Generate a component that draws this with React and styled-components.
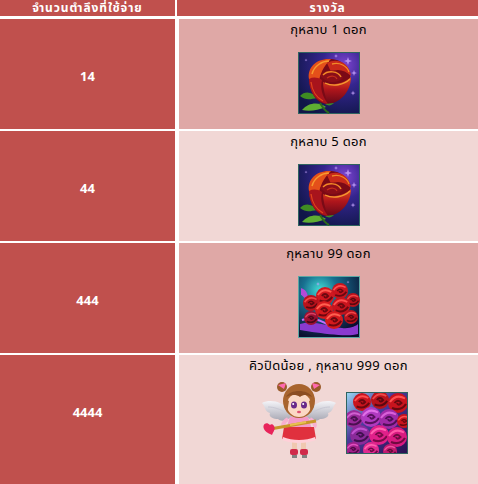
import styled, { createGlobalStyle } from "styled-components";

const GlobalStyle = createGlobalStyle`
  body {
    margin: 0;
    background: #fff;
  }
`;

const rewards = [
  { amount: "14", title: "กุหลาบ 1 ดอก", items: ["rose"] },
  { amount: "44", title: "กุหลาบ 5 ดอก", items: ["rose"] },
  { amount: "444", title: "กุหลาบ 99 ดอก", items: ["bouquet"] },
  { amount: "4444", title: "คิวปิดน้อย , กุหลาบ 999 ดอก", items: ["cupid", "bigBouquet"] },
];

// one blossom seen from above: a disc with a few curled petal lines
const Blossom = ({ x, y, r, fill, dark, light }) => (
  <g>
    <circle cx={x} cy={y} r={r} fill={fill} />
    <path
      d={`M${x - r * 0.8} ${y - r * 0.1} Q${x - r * 0.2} ${y - r * 0.95} ${x + r * 0.7} ${y - r * 0.45}`}
      stroke={light}
      strokeWidth={r * 0.2}
      fill="none"
    />
    <path
      d={`M${x - r * 0.6} ${y + r * 0.5} Q${x + r * 0.3} ${y + r * 0.85} ${x + r * 0.8} ${y + r * 0.1}`}
      stroke={dark}
      strokeWidth={r * 0.22}
      fill="none"
    />
    <path
      d={`M${x - r * 0.35} ${y} Q${x} ${y - r * 0.45} ${x + r * 0.35} ${y} Q${x} ${y + r * 0.35} ${x - r * 0.1} ${y}`}
      stroke={dark}
      strokeWidth={r * 0.2}
      fill="none"
    />
  </g>
);

const Sparkle = ({ x, y, s }) => (
  <path
    d={`M${x} ${y - s} L${x + s * 0.25} ${y - s * 0.25} L${x + s} ${y} L${x + s * 0.25} ${y + s * 0.25} L${x} ${y + s} L${x - s * 0.25} ${y + s * 0.25} L${x - s} ${y} L${x - s * 0.25} ${y - s * 0.25}Z`}
    fill="#c9a6ff"
    opacity="0.8"
  />
);

const RoseIcon = () => (
  <svg width="62" height="62" viewBox="0 0 62 62">
    <defs>
      <radialGradient id="roseBg" cx="0.75" cy="0.2" r="0.9">
        <stop offset="0" stopColor="#7e44d0" />
        <stop offset="0.4" stopColor="#34258e" />
        <stop offset="1" stopColor="#101648" />
      </radialGradient>
      <linearGradient id="frontPetal" x1="0" y1="0" x2="0" y2="1">
        <stop offset="0" stopColor="#e4501c" />
        <stop offset="0.45" stopColor="#b0161c" />
        <stop offset="1" stopColor="#660818" />
      </linearGradient>
    </defs>
    <rect x="0.5" y="0.5" width="61" height="61" fill="url(#roseBg)" stroke="#2f6460" />
    <Sparkle x={50} y={9} s={4} />
    <Sparkle x={56} y={21} s={3} />
    <Sparkle x={55} y={41} s={2.5} />
    <Sparkle x={38} y={4} s={2} />
    <Sparkle x={8} y={8} s={1.5} />
    <path d="M2 44 C7 38 15 40 19 46 C13 47 8 49 2 44Z" fill="#3f8c22" />
    <path d="M4 58 C11 50 21 50 28 55 C20 58 12 60 4 58Z" fill="#5fae32" />
    <path d="M22 51 C25 56 27 59 31 61" stroke="#2c6a1a" strokeWidth="2" fill="none" />
    {/* base bud */}
    <path d="M11 26 C10 14 21 6 33 7 C46 8 54 17 52 29 C50 42 41 51 30 52 C19 52 12 42 11 26Z" fill="#7a0a16" />
    {/* back petals */}
    <path d="M11 27 C9 15 19 6 33 7 C28 12 23 18 21 29Z" fill="#e4501a" />
    <path d="M14 22 C16 14 24 9 31 9" stroke="#f89a30" strokeWidth="1.5" fill="none" />
    <path d="M29 11 C39 5 52 11 53 24 C47 18 39 16 33 20Z" fill="#c82a1a" />
    <path d="M34 12 C42 10 49 14 51 20" stroke="#f08a28" strokeWidth="1.3" fill="none" />
    {/* inner curl */}
    <path d="M22 24 C28 16 42 17 45 26 C41 31 32 31 27 28Z" fill="#8a0e18" />
    <path d="M25 23 C30 18 40 19 43 25" stroke="#f28a26" strokeWidth="1.4" fill="none" />
    <path d="M29 26 C33 23 38 24 39 27" stroke="#c8301c" strokeWidth="1.2" fill="none" />
    {/* front petals */}
    <path d="M11 27 C11 40 18 50 30 52 C24 44 22 36 24 28 C19 25 15 25 11 27Z" fill="#a8141c" />
    <path d="M13 30 C14 39 19 46 25 49" stroke="#e0441c" strokeWidth="1.3" fill="none" />
    <path d="M25 30 C34 34 46 32 53 25 C53 38 44 50 30 52 C27 44 25 36 25 30Z" fill="url(#frontPetal)" />
    <path d="M27 31 C35 35 46 33 52 27" stroke="#f49a30" strokeWidth="1.3" fill="none" />
    <path d="M27 52 C30 54 33 54 36 51 C33 51 30 52 27 52Z" fill="#3f8c22" />
  </svg>
);

const BouquetIcon = () => (
  <svg width="62" height="62" viewBox="0 0 62 62">
    <defs>
      <radialGradient id="bqBg" cx="0.35" cy="0.22" r="0.8">
        <stop offset="0" stopColor="#42dcd4" />
        <stop offset="0.35" stopColor="#187090" />
        <stop offset="1" stopColor="#0a0f30" />
      </radialGradient>
    </defs>
    <rect x="0.5" y="0.5" width="61" height="61" fill="url(#bqBg)" stroke="#5aa8a4" />
    <Sparkle x={20} y={8} s={2} />
    <Sparkle x={50} y={6} s={1.5} />
    <path d="M3 12 C9 14 11 19 9 26 C6 21 4 19 3 19Z" fill="#b44ad8" />
    <path d="M2 48 C14 44 30 50 44 52 C52 53 58 50 60 48 L60 58 C50 61 30 58 14 56 C8 55 4 54 2 54Z" fill="#8a3ad0" />
    <path d="M4 44 C16 40 26 46 32 50" stroke="#c070ff" strokeWidth="2" fill="none" />
    <Blossom x={42} y={15} r={8} fill="#c8141e" dark="#6a0810" light="#ff5050" />
    <Blossom x={27} y={20} r={9} fill="#d01820" dark="#6a0810" light="#ff5a50" />
    <Blossom x={55} y={24} r={7} fill="#b8121c" dark="#5a0810" light="#f04848" />
    <Blossom x={13} y={27} r={8} fill="#b8121c" dark="#5a0810" light="#f04848" />
    <Blossom x={43} y={30} r={9} fill="#c8141e" dark="#6a0810" light="#ff5050" />
    <Blossom x={26} y={34} r={9} fill="#d41a1e" dark="#6a0810" light="#ff6050" />
    <Blossom x={13} y={42} r={7} fill="#9a1030" dark="#4a0618" light="#d84060" />
    <Blossom x={36} y={44} r={9} fill="#d41a1e" dark="#6a0810" light="#ff6050" />
    <Blossom x={53} y={41} r={7} fill="#b8121c" dark="#5a0810" light="#f04848" />
  </svg>
);

const BigBouquetIcon = () => (
  <svg width="62" height="62" viewBox="0 0 62 62">
    <defs>
      <linearGradient id="bbBg" x1="0" y1="0" x2="1" y2="1">
        <stop offset="0" stopColor="#9ad8f4" />
        <stop offset="0.4" stopColor="#4a3a9a" />
        <stop offset="1" stopColor="#2a1050" />
      </linearGradient>
    </defs>
    <rect x="0.5" y="0.5" width="61" height="61" fill="url(#bbBg)" stroke="#2f6460" />
    <Blossom x={16} y={10} r={9} fill="#c8141e" dark="#6a0810" light="#ff5050" />
    <Blossom x={34} y={8} r={9} fill="#b8121c" dark="#5a0810" light="#f04848" />
    <Blossom x={52} y={11} r={10} fill="#c8141e" dark="#6a0810" light="#ff5050" />
    <Blossom x={8} y={27} r={9} fill="#9a2a9a" dark="#4a1050" light="#d060d0" />
    <Blossom x={25} y={25} r={10} fill="#b03ac0" dark="#5a1060" light="#e070e8" />
    <Blossom x={43} y={27} r={10} fill="#a02aa8" dark="#501058" light="#d860d8" />
    <Blossom x={58} y={29} r={7} fill="#c8141e" dark="#6a0810" light="#ff5050" />
    <Blossom x={14} y={43} r={10} fill="#8a2a9a" dark="#401050" light="#c050d0" />
    <Blossom x={33} y={43} r={10} fill="#e0208a" dark="#7a0a48" light="#ff60b0" />
    <Blossom x={51} y={45} r={10} fill="#d81a80" dark="#700a40" light="#ff58a8" />
    <Blossom x={7} y={57} r={7} fill="#a0208a" dark="#500a48" light="#e050c0" />
    <Blossom x={25} y={58} r={8} fill="#e02a90" dark="#700a48" light="#ff60b0" />
    <Blossom x={44} y={59} r={7} fill="#c01a70" dark="#600a38" light="#f050a0" />
    <rect x="0.5" y="0.5" width="61" height="61" fill="none" stroke="#2f6460" />
  </svg>
);

const CupidIcon = () => (
  <svg width="78" height="82" viewBox="0 0 78 82">
    <defs>
      <linearGradient id="wing" x1="0" y1="0" x2="0" y2="1">
        <stop offset="0" stopColor="#f4f4f8" />
        <stop offset="1" stopColor="#a8a8b4" />
      </linearGradient>
    </defs>
    <path d="M30 34 C22 24 10 22 2 26 C6 30 4 34 10 36 C8 40 14 42 18 42 C22 46 28 42 32 40Z" fill="url(#wing)" />
    <path d="M48 34 C56 24 68 22 76 26 C72 30 74 34 68 36 C70 40 64 42 60 42 C56 46 50 42 46 40Z" fill="url(#wing)" />
    <path d="M8 30 C14 30 20 32 26 36 M70 30 C64 30 58 32 52 36" stroke="#c8c8d4" strokeWidth="1" fill="none" />
    <rect x="32" y="64" width="5" height="10" fill="#f0c8b0" />
    <rect x="41" y="64" width="5" height="10" fill="#f0c8b0" />
    <rect x="30" y="72" width="8" height="6" rx="2" fill="#d02a4a" />
    <rect x="40" y="72" width="8" height="6" rx="2" fill="#d02a4a" />
    <rect x="32" y="78" width="5" height="3" fill="#808080" />
    <rect x="42" y="78" width="5" height="3" fill="#808080" />
    <path d="M30 40 L48 40 L52 52 L26 52Z" fill="#f49ac8" />
    <path d="M24 50 L54 50 L56 62 C46 66 32 66 22 62Z" fill="#e0303e" />
    <path d="M23 60 C32 64 46 64 55 60 L56 63 C46 67 32 67 22 63Z" fill="#ffd0d8" />
    <path d="M28 42 C24 44 22 48 24 50" stroke="#f7b0d0" strokeWidth="4" fill="none" />
    <path d="M50 42 C54 44 56 48 54 50" stroke="#f7b0d0" strokeWidth="4" fill="none" />
    <path d="M10 52 L56 44" stroke="#c8962a" strokeWidth="3" />
    <path d="M30 48 L46 45" stroke="#e8c050" strokeWidth="2" />
    <path d="M10 48 C6 44 2 48 4 52 C5 55 10 57 12 58 C13 55 16 52 14 49 C13 47 11 47 10 48Z" fill="#e8245a" />
    <circle cx="22" cy="10" r="5" fill="#9a5a2a" />
    <circle cx="56" cy="10" r="5" fill="#9a5a2a" />
    <path d="M18 8 L26 6 L24 12Z" fill="#ff6ab0" />
    <path d="M60 8 L52 6 L54 12Z" fill="#ff6ab0" />
    <ellipse cx="39" cy="24" rx="16" ry="17" fill="#a8642e" />
    <ellipse cx="39" cy="28" rx="12" ry="12" fill="#fbd8c4" />
    <path d="M26 20 C30 12 48 12 52 20 C48 18 44 17 40 20 C36 17 30 18 26 20Z" fill="#8c4e22" />
    <path d="M25 22 L27 36 L29 24Z" fill="#a8642e" />
    <path d="M53 22 L51 36 L49 24Z" fill="#a8642e" />
    <ellipse cx="34" cy="28" rx="3" ry="3.6" fill="#6a2a8a" />
    <ellipse cx="44" cy="28" rx="3" ry="3.6" fill="#6a2a8a" />
    <circle cx="33.2" cy="27" r="1" fill="#fff" />
    <circle cx="43.2" cy="27" r="1" fill="#fff" />
    <ellipse cx="39" cy="35" rx="2" ry="1.2" fill="#e05070" />
  </svg>
);

const icons = {
  rose: RoseIcon,
  bouquet: BouquetIcon,
  bigBouquet: BigBouquetIcon,
  cupid: CupidIcon,
};

const App = () => (
  <>
    <GlobalStyle />
    <Table>
      <HeaderRow>
        <HeaderCell>จำนวนตำลึงที่ใช้จ่าย</HeaderCell>
        <HeaderCell>รางวัล</HeaderCell>
      </HeaderRow>
      <Body>
        {rewards.map((r, i) => {
          const last = i === rewards.length - 1;
          return (
            <Row key={r.amount} $last={last}>
              <AmountCell $last={last}>{r.amount}</AmountCell>
              <RewardCell $light={i % 2 === 1}>
                <Title>{r.title}</Title>
                <Pictures $pair={r.items.length > 1}>
                  {r.items.map((name) => {
                    const Icon = icons[name];
                    return (
                      <Picture key={name} $drop={name === "bigBouquet"}>
                        <Icon />
                      </Picture>
                    );
                  })}
                </Pictures>
              </RewardCell>
            </Row>
          );
        })}
      </Body>
    </Table>
  </>
);

const Table = styled.div`
  width: 478px;
  height: 484px;
  overflow: hidden;
  background: #fff;
  font-family: Tahoma, "Noto Sans Thai", "Noto Sans", "DejaVu Sans", sans-serif;
  font-size: 13px;
`;

const HeaderRow = styled.div`
  display: grid;
  grid-template-columns: 175px 1fr;
  column-gap: 2px;
  height: 16px;
  margin-bottom: 3px;
`;

const HeaderCell = styled.div`
  background: #c0504d;
  color: #fff;
  font-weight: bold;
  font-size: 12px;
  letter-spacing: 0.9px;
  text-align: center;
  line-height: 16px;
  white-space: nowrap;
`;

const Body = styled.div`
  display: flex;
  flex-direction: column;
  gap: 2px;
`;

const Row = styled.div`
  display: grid;
  grid-template-columns: 175px 1fr;
  column-gap: 4px;
  height: ${(p) => (p.$last ? "140px" : "110px")};
`;

const AmountCell = styled.div`
  background: #c0504d;
  color: #fff;
  font-weight: bold;
  display: flex;
  justify-content: center;
  align-items: ${(p) => (p.$last ? "flex-start" : "center")};
  padding-top: ${(p) => (p.$last ? "48px" : "5px")};
  box-sizing: border-box;
`;

const RewardCell = styled.div`
  background: ${(p) => (p.$light ? "#f1d7d5" : "#dfa8a6")};
  display: flex;
  flex-direction: column;
  align-items: center;
  padding-top: 2px;
`;

const Title = styled.div`
  color: #000;
  font-size: 13px;
  letter-spacing: 0.3px;
  line-height: 18px;
`;

const Pictures = styled.div`
  display: flex;
  align-items: flex-start;
  gap: 8px;
  margin-top: ${(p) => (p.$pair ? "2px" : "13px")};
  margin-left: ${(p) => (p.$pair ? "10px" : "0")};
`;

const Picture = styled.div`
  display: flex;
  margin-top: ${(p) => (p.$drop ? "15px" : "0")};

  svg {
    display: block;
  }
`;

export default App;
